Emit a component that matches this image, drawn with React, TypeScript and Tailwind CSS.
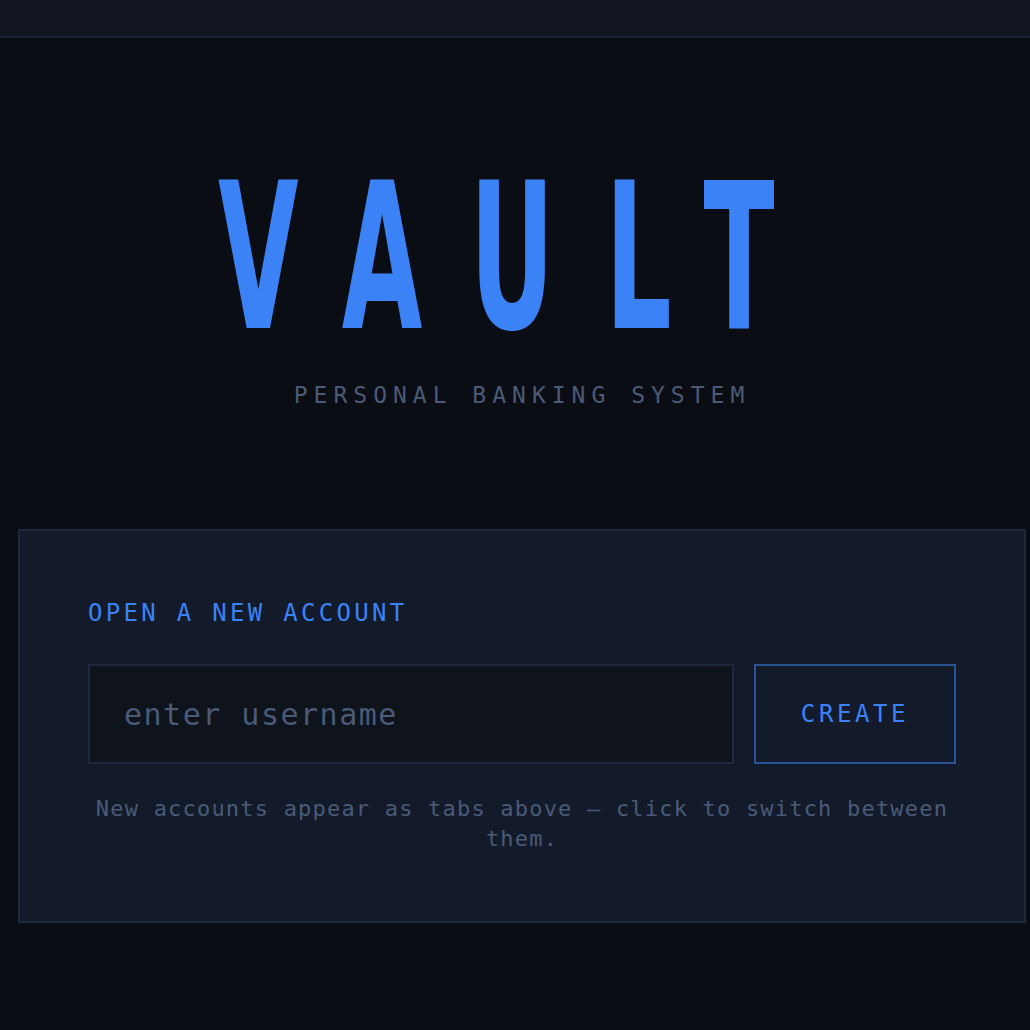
export default function App() {
  return (
    <div className="min-h-[1030px] bg-[#0a0d13] font-['DejaVu_Sans_Mono',monospace]">
      <div className="h-[38px] border-b-2 border-[#1b2335] bg-[#10151f]" />

      <div className="pl-[18px] pr-[4px]">
        <div className="flex flex-col items-center pt-[118px]">
          {/* squeeze the condensed bold sans to get the tall narrow look */}
          <h1 className="w-max origin-center scale-x-[0.567] font-['DejaVu_Sans_Condensed','DejaVu_Sans',sans-serif] text-[204px] leading-none font-bold tracking-[90px] text-[#3b82f6]">
            VAULT
          </h1>
          <p className="mt-[24px] text-[23px] leading-none tracking-[6px] text-[#4b5a76]">
            PERSONAL BANKING SYSTEM
          </p>
        </div>

        <section className="mt-[122px] border-2 border-[#1e293b] bg-[#131b2a] px-[68px] pt-[70px] pb-[67px]">
          <h2 className="text-[24px] leading-none tracking-[3.3px] text-[#3b82f6]">OPEN A NEW ACCOUNT</h2>

          <div className="mt-[39px] flex gap-[20px]">
            <input
              type="text"
              placeholder="enter username"
              className="h-[100px] min-w-0 flex-1 border-2 border-[#1e293b] bg-[#0e131c] pl-[34px] font-['DejaVu_Sans_Mono',monospace] text-[30px] tracking-[1.5px] text-[#cbd5e1] outline-none placeholder:text-[#4a5a77]"
            />
            <button className="h-[100px] w-[202px] border-2 border-[#2b5496] text-[24px] tracking-[3.6px] text-[#3b82f6]">
              CREATE
            </button>
          </div>

          <p className="mt-[30px] text-center text-[22px] leading-[30px] tracking-[1.2px] text-[#4a5a77]">
            New accounts appear as tabs above — click to switch between them.
          </p>
        </section>
      </div>
    </div>
  );
}
